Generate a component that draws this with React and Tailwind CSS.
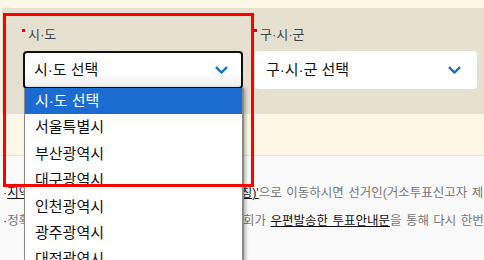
const regions = [
  "시·도 선택",
  "서울특별시",
  "부산광역시",
  "대구광역시",
  "인천광역시",
  "광주광역시",
  "대전광역시",
];

function Chevron() {
  return (
    <svg width="13" height="8" viewBox="0 0 13 8" fill="none">
      <path d="M1 1.2l5.5 5.3L12 1.2" stroke="#1a6fc0" strokeWidth="2.4" />
    </svg>
  );
}

function Field({ label, value, active, className }) {
  return (
    <div className={className}>
      <div className="flex items-start h-[18px] text-[13px] leading-[18px] text-[#3b4250]">
        <span className="mt-[3px] -ml-[1px] w-[3px] h-[3px] bg-[#e60012]" />
        <span className="ml-[3px]">{label}</span>
      </div>
      <div
        className={
          "mt-[7px] h-[38px] flex items-center justify-between rounded-[4px] text-[15px] text-[#111] " +
          (active
            ? "border-2 border-[#111] bg-gradient-to-b from-white from-60% to-[#ececec] pl-[9px] pr-[13px]"
            : "bg-white pl-[11px] pr-[16px]")
        }
      >
        <span>{value}</span>
        <Chevron />
      </div>
    </div>
  );
}

export default function App() {
  return (
    <div className="relative w-[484px] h-[260px] overflow-hidden bg-[#f9f9fa] font-['Liberation_Sans','Noto_Sans_CJK_KR',sans-serif]">
      <div className="bg-[#fdf7e7] pt-[8px] pb-[41px] pl-[2px] border-b border-[#e6e1d8]">
        <div className="flex gap-[12px] h-[106px] bg-[#e6e0d0] pl-[21px] pr-[7px] pt-[18px]">
          <Field label="시·도" value="시·도 선택" active className="w-[220px]" />
          <Field label="구·시·군" value="구·시·군 선택" className="flex-1" />
        </div>
      </div>

      <ul className="pt-[23px] pl-[3px] text-[12.5px] leading-[28px] text-[#777] whitespace-nowrap [word-spacing:1px]">
        <li className="flex">
          <span className="w-[9px] text-[#333]">·</span>
          <span>
            <span className="text-[#111] underline">
              지역별 투표소 안내(투표소 및 사전투표소 명칭)'
            </span>
            으로 이동하시면 선거인(거소투표신고자 제외)은 투표소를 확인할 수 있습니다.
          </span>
        </li>
        <li className="flex">
          <span className="w-[9px] text-[#333]">·</span>
          <span>
            정확한 투표소위치는 각구·시·군선거관리위원회가{" "}
            <span className="text-[#111] underline">우편발송한 투표안내문</span>
            을 통해 다시 한번 확인하시기 바랍니다.
          </span>
        </li>
      </ul>

      <ul className="absolute left-[24px] top-[88px] w-[220px] bg-white border-l border-r-2 border-[#8a8a8a] shadow-[2px_0_3px_rgba(0,0,0,0.25)] text-[15px] text-[#111]">
        {regions.map((r, i) => (
          <li
            key={r}
            className={
              "h-[26.4px] flex items-center pl-[10px] " +
              (i === 0 ? "bg-[#1b6bd0] text-white" : "")
            }
          >
            {r}
          </li>
        ))}
      </ul>

      <div className="pointer-events-none absolute left-[3px] top-[13px] w-[251px] h-[174px] border-[3px] border-[#ff0000]" />
    </div>
  );
}
